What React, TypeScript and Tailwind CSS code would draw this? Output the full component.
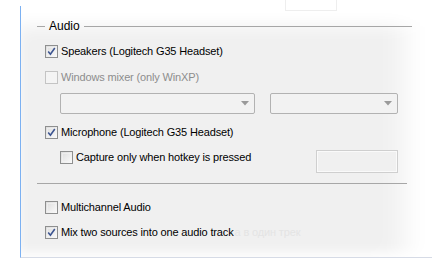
import clsx from 'clsx';

const FONT = 'font-["Segoe_UI","Liberation_Sans",Arial,sans-serif]';

function CheckBox({ checked, disabled }: { checked?: boolean; disabled?: boolean }) {
  return (
    <div
      className={clsx(
        'relative h-[13px] w-[13px] shrink-0 border',
        disabled
          ? 'border-[#c4c4c4] bg-[#f4f4f4]'
          : 'border-[#8e8f8f] bg-gradient-to-br from-[#dcdcdc] to-[#fbfbfb]'
      )}
    >
      {!disabled && <div className="absolute inset-[1px] border border-[#f4f4f4]/60" />}
      {checked && (
        <svg className="absolute left-[1px] top-[1px]" width="9" height="9" viewBox="0 0 9 9">
          <path d="M1.2 4.6 L3.4 7.2 L7.8 1" fill="none" stroke="#3d5591" strokeWidth="1.6" />
        </svg>
      )}
    </div>
  );
}

function CheckRow({
  label,
  checked,
  disabled,
  className,
}: {
  label: string;
  checked?: boolean;
  disabled?: boolean;
  className?: string;
}) {
  return (
    <div className={clsx('flex h-[13px] items-center gap-[3px]', className)}>
      <CheckBox checked={checked} disabled={disabled} />
      <span className={clsx('whitespace-nowrap leading-none', disabled ? 'text-[#8d8d8d]' : 'text-black')}>
        {label}
      </span>
    </div>
  );
}

function Dropdown({ className }: { className?: string }) {
  return (
    <div
      className={clsx(
        'flex h-[21px] items-center justify-end rounded-[2px] border border-[#b2b2b2] bg-[#f2f2f2] pr-[5px]',
        className
      )}
    >
      <svg width="8" height="5" viewBox="0 0 8 5">
        <path d="M0 0 H8 L4 4.5 Z" fill="#9a9a9a" />
      </svg>
    </div>
  );
}

export default function App() {
  return (
    <div
      className={clsx(
        'relative h-[266px] w-[442px] overflow-hidden bg-white text-[11px] tracking-[-0.15px]',
        FONT
      )}
    >
      {/* faint tab edge above the panel */}
      <div className="absolute left-[285px] top-0 h-[11px] w-[52px] border border-t-0 border-[#eeeeee] bg-white" />

      <div className="ml-[20px] mt-[6px] h-[252px] w-[412px] border-b border-l border-b-[#d6dbe6] border-l-[#7cb1f2] bg-[#f0f0f0] shadow-[inset_0_26px_18px_-6px_#fff,inset_-40px_0_28px_-12px_#fff,inset_0_-10px_12px_-6px_#fff]">
        {/* group header */}
        <div className="flex items-center pt-[14px]">
          <div className="ml-[16px] h-px w-[8px] bg-[#a7a7a7]" />
          <span className="px-[4px] text-[12px] leading-[12px] tracking-normal text-black">Audio</span>
          <div className="h-px w-[328px] bg-[#a7a7a7]" />
        </div>

        <div className="flex flex-col pl-[24px] pt-[13px]">
          <CheckRow label="Speakers (Logitech G35 Headset)" checked />
          <CheckRow label="Windows mixer (only WinXP)" disabled className="mt-[13px]" />

          <div className="ml-[15px] mt-[9px] flex gap-[15px]">
            <Dropdown className="w-[195px]" />
            <Dropdown className="w-[128px]" />
          </div>

          <CheckRow label="Microphone (Logitech G35 Headset)" checked className="mt-[12px]" />

          <div className="ml-[15px] mt-[11px] flex w-[338px] items-start">
            <CheckRow label="Capture only when hotkey is pressed" className="mt-[1px]" />
            <div className="ml-auto h-[23px] w-[82px] border border-[#cfcfcf] bg-[#f0f0f0] shadow-[inset_0_0_0_1px_#fafafa]" />
          </div>
        </div>

        <div className="ml-[16px] mt-[10px] h-px w-[370px] bg-[#a7a7a7]" />

        <div className="flex flex-col pl-[24px] pt-[17px]">
          <CheckRow label="Multichannel Audio" />
          <div className="mt-[12px] flex items-center">
            <CheckRow label="Mix two sources into one audio track" checked />
            <span className="ml-[1px] whitespace-nowrap leading-none text-[#e4e4e4]">а в один трек</span>
          </div>
        </div>
      </div>
    </div>
  );
}
